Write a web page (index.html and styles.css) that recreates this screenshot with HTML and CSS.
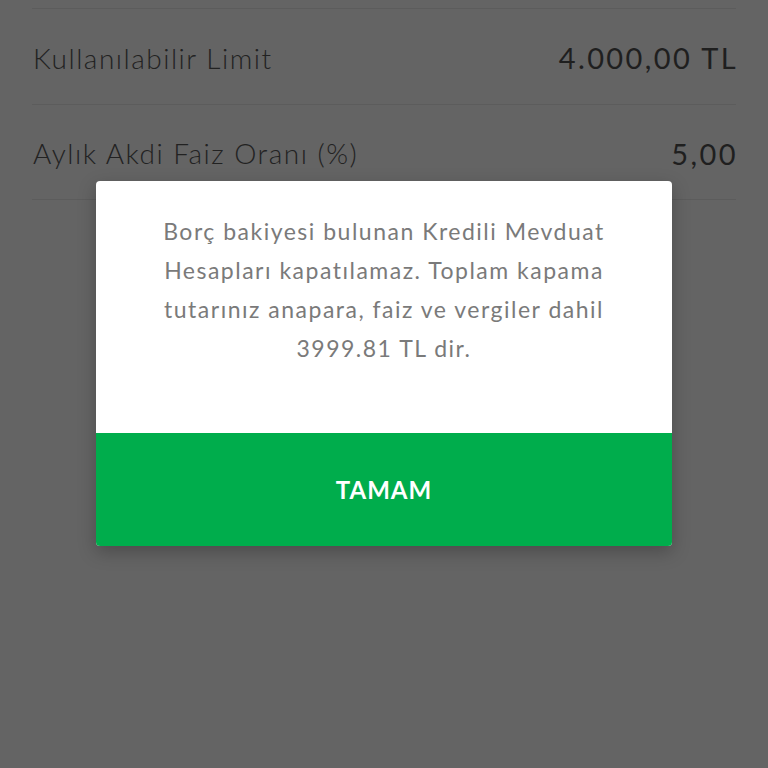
FILE: index.html
```html
<!DOCTYPE html>
<html lang="tr">
<head>
<meta charset="utf-8">
<link rel="stylesheet" href="styles.css">
</head>
<body>
<div class="screen">
  <div class="list">
    <div class="row"><span class="label">Kullanılabilir Limit</span><span class="value">4.000,00 TL</span></div>
    <div class="row"><span class="label">Aylık Akdi Faiz Oranı (%)</span><span class="value">5,00</span></div>
  </div>
  <div class="overlay">
    <div class="dialog">
      <p class="message">Borç bakiyesi bulunan Kredili Mevduat Hesapları kapatılamaz. Toplam kapama tutarınız anapara, faiz ve vergiler dahil 3999.81 TL dir.</p>
      <button class="ok">TAMAM</button>
    </div>
  </div>
</div>
</body>
</html>
```
FILE: styles.css
```css
* { box-sizing: border-box; }
html, body { margin: 0; padding: 0; }
body {
  width: 768px;
  height: 768px;
  background: #646464;
  font-family: "Lato", "Open Sans", sans-serif;
  overflow: hidden;
}
.screen {
  position: relative;
  width: 768px;
  height: 768px;
}
.list {
  padding: 8px 32px 0 32px;
}
.row {
  display: flex;
  justify-content: space-between;
  align-items: center;
  height: 96px;
  border-top: 1px solid #5c5c5c;
  color: #262626;
  font-size: 28px;
  padding-top: 2px;
}
.row:last-child { border-bottom: 1px solid #5c5c5c; }
.label { padding-left: 1px; letter-spacing: 1.5px; font-weight: 300; color: #222; }
.value { font-weight: 400; letter-spacing: 2.4px; margin-right: -2px; font-size: 29px; color: #1f1f1f; }
.overlay {
  position: absolute;
  inset: 0;
  display: flex;
  justify-content: center;
  align-items: flex-start;
  padding-top: 181px;
}
.dialog {
  width: 576px;
  background: #ffffff;
  border-radius: 4px;
  overflow: hidden;
  box-shadow: 0 6px 18px rgba(0,0,0,0.25);
  display: flex;
  flex-direction: column;
}
.message {
  margin: 0;
  height: 252px;
  padding: 31px 50px 0 50px;
  text-align: center;
  color: #7a7a7a;
  font-size: 23px;
  line-height: 39px;
  letter-spacing: 1.5px;
}
.ok {
  height: 113px;
  border: none;
  background: #00ad4c;
  color: #ffffff;
  font-family: "Lato", sans-serif;
  font-weight: 700;
  font-size: 24px;
  letter-spacing: 1px;
  padding: 0;
  margin: 0;
}
```
